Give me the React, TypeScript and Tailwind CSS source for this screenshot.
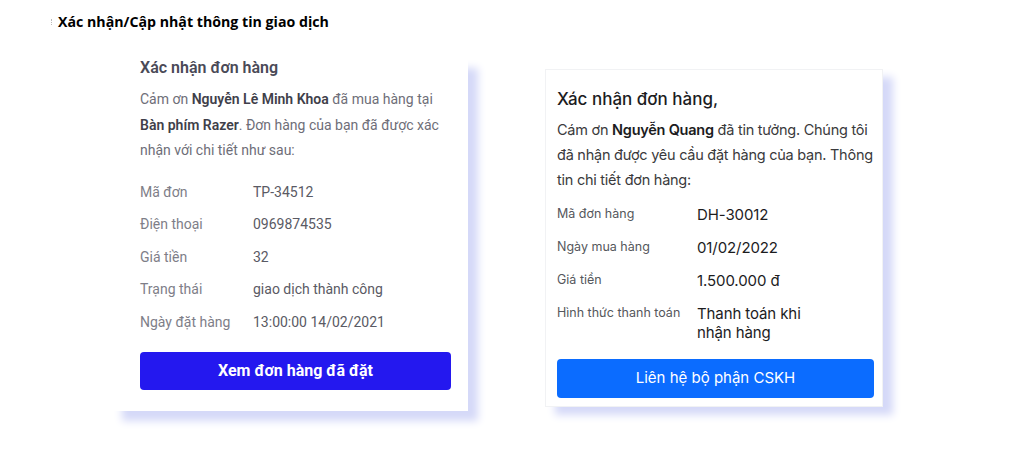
const leftRows: [string, string][] = [
  ['Mã đơn', 'TP-34512'],
  ['Điện thoại', '0969874535'],
  ['Giá tiền', '32'],
  ['Trạng thái', 'giao dịch thành công'],
  ['Ngày đặt hàng', '13:00:00 14/02/2021'],
]

const rightRows: [string, string][] = [
  ['Mã đơn hàng', 'DH-30012'],
  ['Ngày mua hàng', '01/02/2022'],
  ['Giá tiền', '1.500.000 đ'],
  ['Hình thức thanh toán', 'Thanh toán khi nhận hàng'],
]

function LeftCard() {
  return (
    <div className="mt-[26px] w-[356px] bg-white pl-[28px] pr-[17px] pb-[21px] shadow-[10px_10px_8px_0_#d5d9f8] font-['Roboto',sans-serif]">
      <h2 className="text-[16px] leading-[20px] font-semibold text-[#4a4a57]">Xác nhận đơn hàng</h2>
      <p className="mt-[9px] text-[14px] leading-[25.5px] text-[#6e6e78]">
        Cảm ơn <b className="font-semibold text-[#3f3f4a]">Nguyễn Lê Minh Khoa</b> đã mua hàng tại{' '}
        <b className="font-semibold text-[#3f3f4a]">Bàn phím Razer</b>. Đơn hàng của bạn đã được xác nhận với chi tiết như sau:
      </p>
      <div className="mt-[12px]">
        {leftRows.map(([k, v]) => (
          <div key={k} className="flex text-[14px] leading-[32.5px]">
            <span className="w-[113px] text-[#7e7e88]">{k}</span>
            <span className="text-[#5a5a64]">{v}</span>
          </div>
        ))}
      </div>
      <button className="mt-[14px] h-[38px] w-full rounded-[4px] bg-[#2418ef] text-[16px] font-bold text-white">
        Xem đơn hàng đã đặt
      </button>
    </div>
  )
}

function RightCard() {
  return (
    <div className="mt-[37px] w-[338px] border border-[#f1f2f4] bg-white pl-[11px] pr-[8px] pt-[17px] pb-[8px] shadow-[10px_8px_8px_0_#d5d9f8] font-['Inter',sans-serif]">
      <h2 className="text-[17px] leading-[24px] font-medium text-[#1c1c1e]">Xác nhận đơn hàng,</h2>
      <p className="mt-[6px] text-[14.5px] leading-[25px] tracking-[-0.25px] text-[#3a3a3c]">
        Cám ơn <b className="font-semibold text-[#1c1c1e]">Nguyễn Quang</b> đã tin tưởng. Chúng tôi đã nhận được yêu cầu đặt hàng của bạn. Thông tin chi tiết đơn hàng:
      </p>
      <div className="mt-[13px] flex flex-col gap-[14px]">
        {rightRows.map(([k, v]) => (
          <div key={k} className="flex items-start">
            <span className="w-[140px] text-[12.5px] leading-[18px] text-[#55575c]">{k}</span>
            <span className="w-[112px] text-[15px] leading-[19px] tracking-[-0.1px] text-[#1c1c1e]">{v}</span>
          </div>
        ))}
      </div>
      <button className="mt-[17px] h-[39px] w-full rounded-[4px] bg-[#0b6cff] text-[15px] text-white">
        Liên hệ bộ phận CSKH
      </button>
    </div>
  )
}

export default function App() {
  return (
    <div className="h-[455px] w-[1024px] bg-white overflow-hidden">
      <div className="flex items-center pt-[12px] pl-[51px]">
        <span className="mr-[6px] h-[6px] w-px border-l border-dotted border-[#bbbbbb]" />
        <h1 className="text-[14.2px] leading-[20px] font-bold text-black font-['Open_Sans',sans-serif]">
          Xác nhận/Cập nhật thông tin giao dịch
        </h1>
      </div>
      <div className="flex items-start gap-[77px] pl-[112px]">
        <LeftCard />
        <RightCard />
      </div>
    </div>
  )
}
